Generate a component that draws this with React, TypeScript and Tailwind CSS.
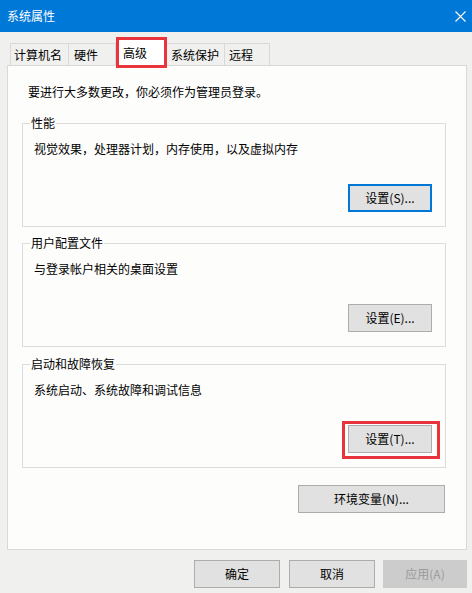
import React from 'react';

const tabs = [
  { label: '计算机名', w: 'w-[59px] border-l pl-[3px]' },
  { label: '硬件', w: 'w-[47px] pl-[5px]' },
  { label: '高级', active: true },
  { label: '系统保护', w: 'w-[58px] pl-[4px]' },
  { label: '远程', w: 'w-[45px] pl-[4px]' },
];

function Button({
  children,
  className = '',
  primary = false,
  disabled = false,
}: {
  children: React.ReactNode;
  className?: string;
  primary?: boolean;
  disabled?: boolean;
}) {
  const tone = disabled
    ? 'border border-[#cccccc] bg-[#cccccc] text-[#9b9b9b]'
    : primary
      ? 'border-2 border-[#0078d7] bg-[#e1e1e1] text-black'
      : 'border border-[#adadad] bg-[#e1e1e1] text-black';
  return (
    <button
      type="button"
      className={`flex h-[28px] items-center justify-center text-[12px] leading-[16px] ${tone} ${className}`}
    >
      {children}
    </button>
  );
}

function Group({
  title,
  text,
  className = '',
  children,
}: {
  title: string;
  text: string;
  className?: string;
  children: React.ReactNode;
}) {
  return (
    <fieldset className={`ml-[14px] mr-[20px] border border-[#dcdcdc] pb-[14px] pl-[11px] pr-[13px] ${className}`}>
      <legend className="-ml-[4px] px-[1px] text-[12px] leading-[16px] text-black">{title}</legend>
      <p className="mt-[10px] text-[12px] leading-[16px] text-black">{text}</p>
      <div className="mt-[27px] flex justify-end">{children}</div>
    </fieldset>
  );
}

export default function App() {
  return (
    <div
      className="h-[593px] w-[472px] overflow-hidden bg-[#f0f0ee]"
      style={{ fontFamily: '"Noto Sans CJK SC", "Noto Sans", sans-serif' }}
    >
      {/* title bar */}
      <div className="flex h-[32px] items-center justify-between bg-[#0078d7] pl-[7px] pr-[6px]">
        <span className="text-[12px] leading-[16px] text-white">系统属性</span>
        <svg width="11" height="11" viewBox="0 0 11 11" className="mt-[1px]">
          <path d="M0.5 0.5 L10.5 10.5 M10.5 0.5 L0.5 10.5" stroke="#ffffff" strokeWidth="1.1" fill="none" />
        </svg>
      </div>

      <div className="pl-[7px] pr-[5px]">
        {/* tabs */}
        <div className="mt-[5px] flex items-end pl-[3px]">
          {tabs.map((t) =>
            t.active ? (
              <div
                key={t.label}
                className="relative z-10 -mb-[3px] h-[31px] w-[51px] border-[3px] border-[#e8343c] bg-white pl-[4px] pt-[5px] text-[12px] leading-[16px] text-black"
              >
                {t.label}
              </div>
            ) : (
              <div
                key={t.label}
                className={`h-[22px] border-r border-t border-[#d9d9d9] pt-[3px] text-[12px] leading-[16px] text-black ${t.w}`}
              >
                {t.label}
              </div>
            ),
          )}
        </div>

        {/* panel */}
        <div className="border border-[#d9d9d9] bg-[#fdfdfc] pb-[36px] pt-[18px]">
          <p className="pl-[20px] text-[12px] leading-[16px] text-black">要进行大多数更改，你必须作为管理员登录。</p>

          <Group title="性能" text="视觉效果，处理器计划，内存使用，以及虚拟内存" className="mt-[15px]">
            <Button primary className="w-[84px]">设置(S)...</Button>
          </Group>

          <Group title="用户配置文件" text="与登录帐户相关的桌面设置" className="mt-[8px]">
            <Button className="w-[84px]">设置(E)...</Button>
          </Group>

          <Group title="启动和故障恢复" text="系统启动、系统故障和调试信息" className="mt-[9px]">
            <div className="relative">
              <Button className="w-[84px]">设置(T)...</Button>
              <span className="pointer-events-none absolute -bottom-[6px] -left-[6px] -right-[8px] -top-[4px] border-[3px] border-[#e8343c]" />
            </div>
          </Group>

          <div className="mt-[17px] flex justify-end pr-[21px]">
            <Button className="w-[147px]">环境变量(N)...</Button>
          </div>
        </div>

        {/* dialog buttons */}
        <div className="mt-[10px] flex justify-end">
          <Button className="w-[86px]">确定</Button>
          <Button className="ml-[9px] w-[86px]">取消</Button>
          <Button disabled className="ml-[8px] w-[84px]">应用(A)</Button>
        </div>
      </div>
    </div>
  );
}
